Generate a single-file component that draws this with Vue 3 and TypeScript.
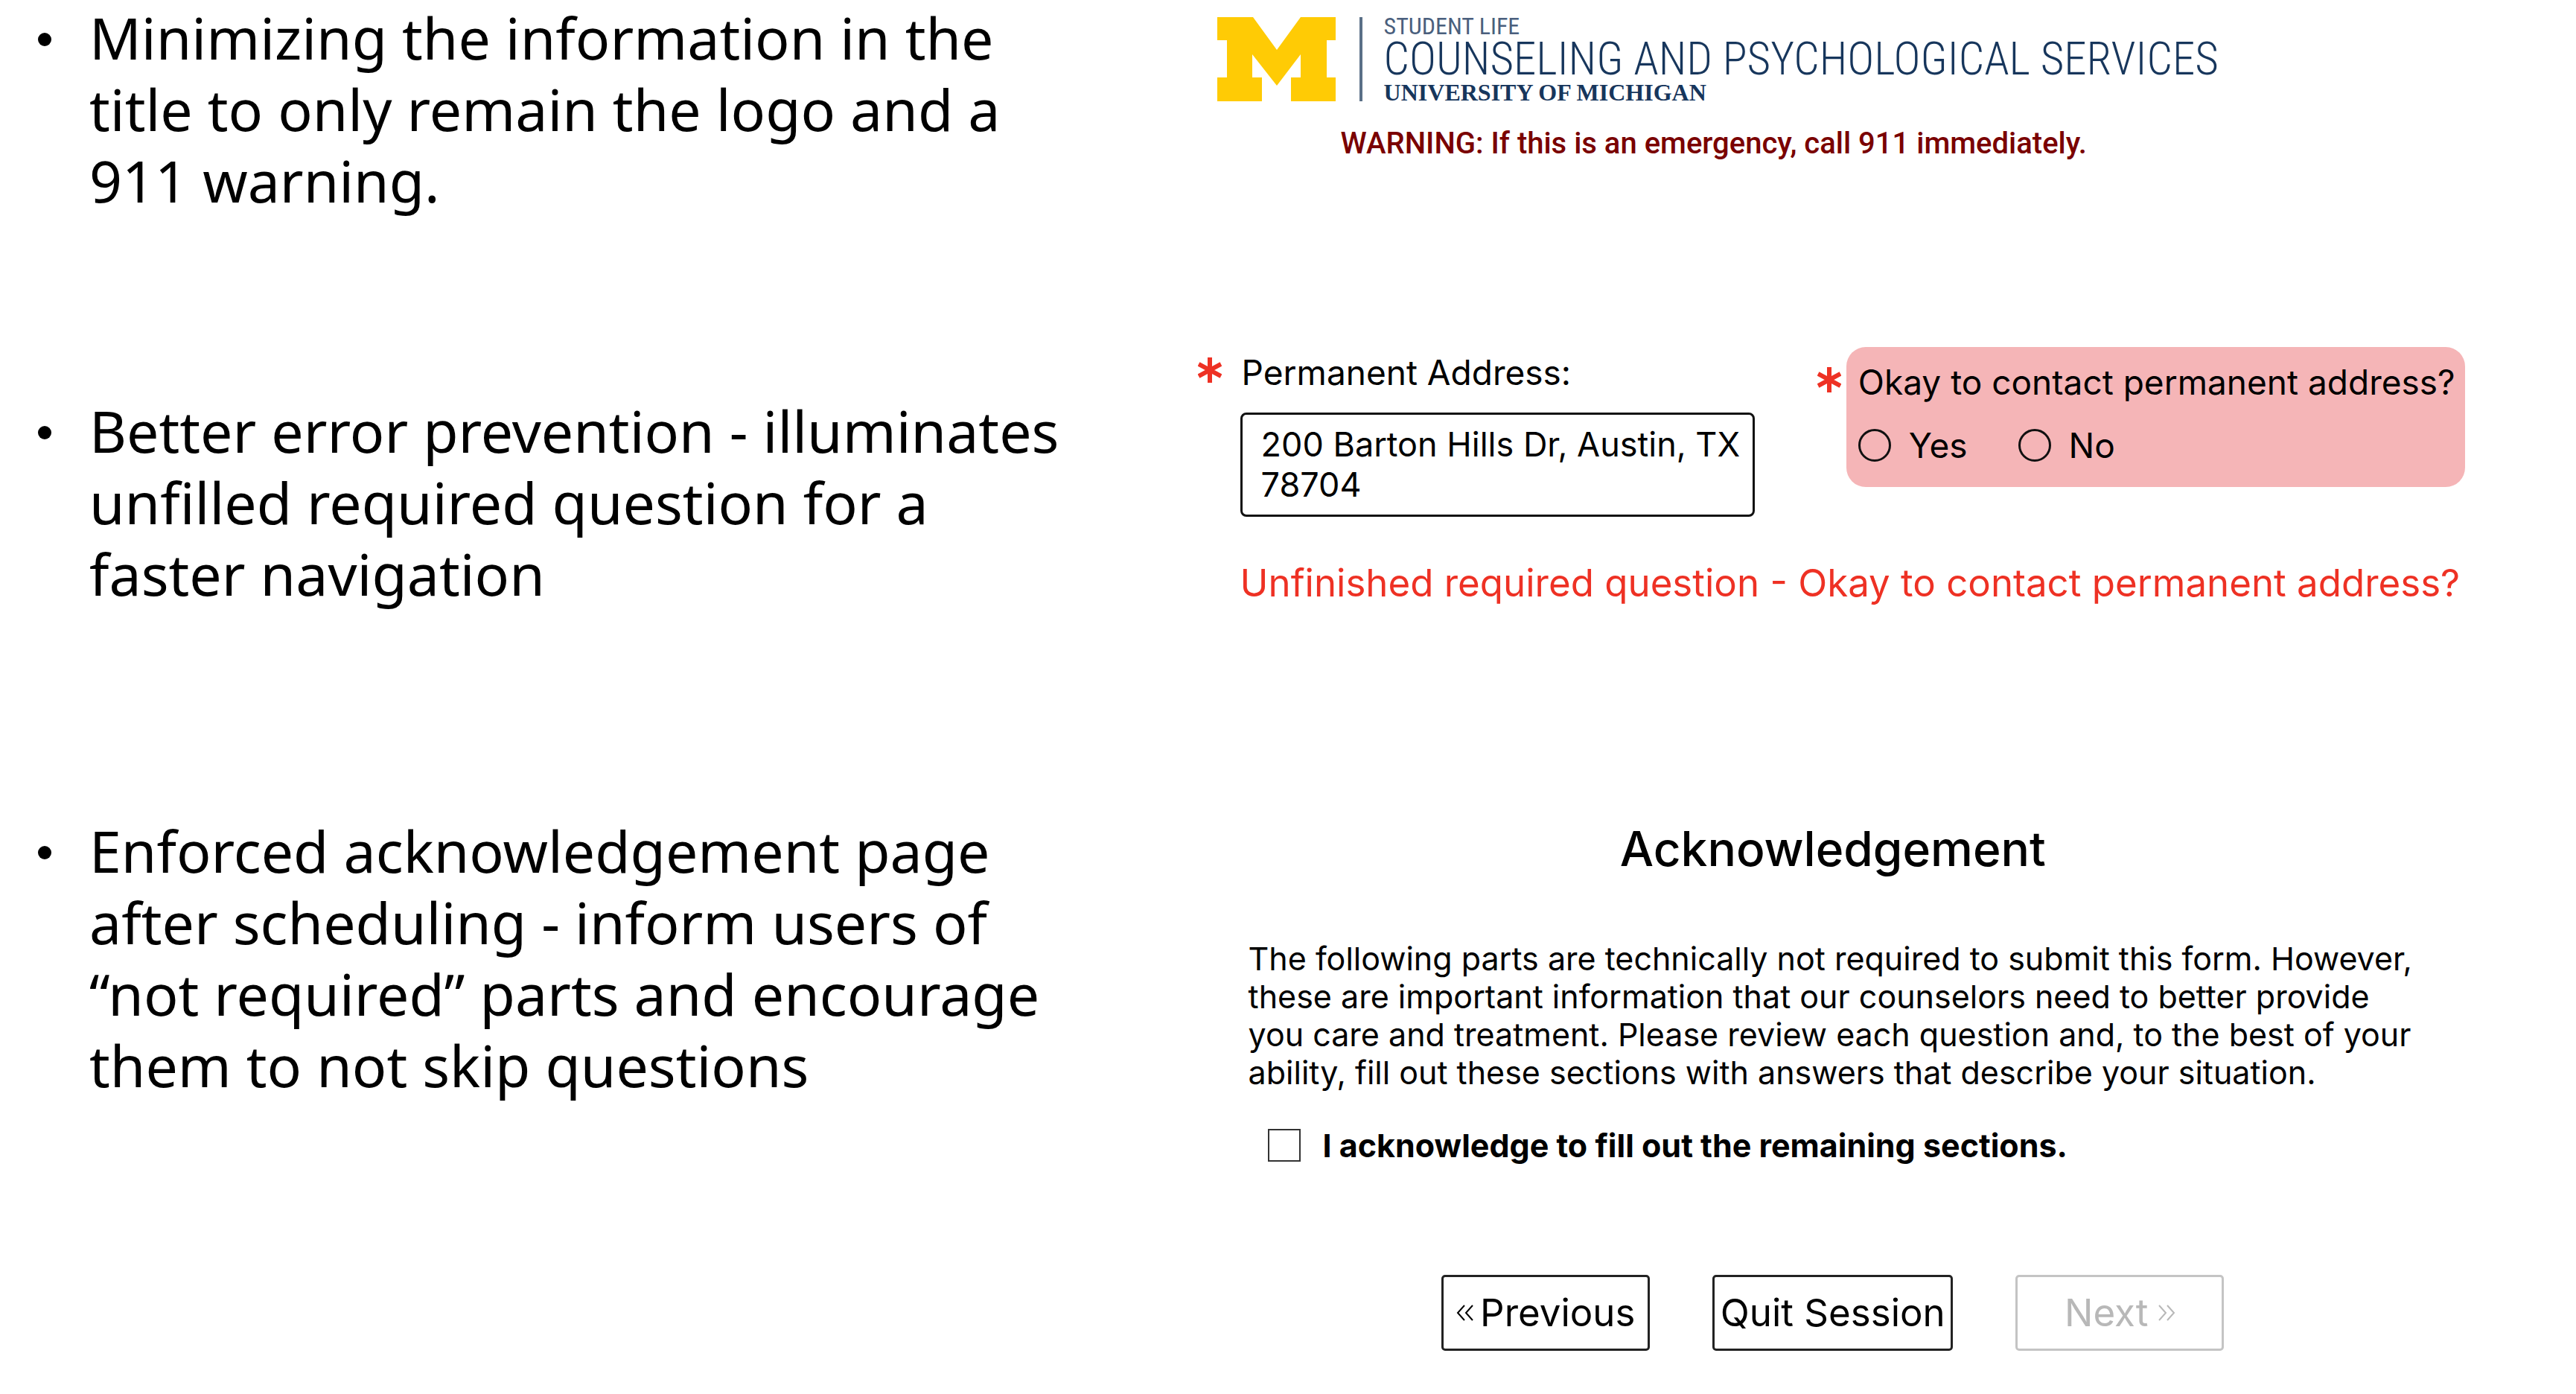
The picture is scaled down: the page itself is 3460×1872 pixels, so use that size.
<script setup lang="ts">
import { ref } from 'vue'

const notes: string[] = [
  'Minimizing the information in the\ntitle to only remain the logo and a\n911 warning.',
  'Better error prevention - illuminates\nunfilled required question for a\nfaster navigation',
  'Enforced acknowledgement page\nafter scheduling - inform users of\n“not required” parts and encourage\nthem to not skip questions',
]

const ackText: string = [
  'The following parts are technically not required to submit this form. However,',
  'these are important information that our counselors need to better provide',
  'you care and treatment. Please review each question and, to the best of your',
  'ability, fill out these sections with answers that describe your situation.',
].join('\n')

const address = ref<string>('200 Barton Hills Dr, Austin, TX 78704')
const contact = ref<string>('')
const contactOptions: string[] = ['Yes', 'No']
const acknowledged = ref<boolean>(false)
</script>

<template>
  <main class="page">
    <section class="row row-title">
      <ul class="note"><li>{{ notes[0] }}</li></ul>
      <header class="brand">
        <div class="logo">
          <svg class="logo-m" viewBox="0 0 161 113" aria-hidden="true">
            <path
              fill="#ffcb05"
              d="M0 0H48L80 44L112 0H159V31H147V81H159V113H99V81H112V50L80 92L47 50V81H60V113H0V81H13V31H0Z"
            />
          </svg>
          <div class="logo-text">
            <span class="unit">STUDENT LIFE</span>
            <span class="name">COUNSELING AND PSYCHOLOGICAL SERVICES</span>
            <span class="school">UNIVERSITY OF MICHIGAN</span>
          </div>
        </div>
        <p class="warning">WARNING: If this is an emergency, call 911 immediately.</p>
      </header>
    </section>

    <section class="row row-form">
      <ul class="note"><li>{{ notes[1] }}</li></ul>
      <form class="form" @submit.prevent>
        <div class="fields">
          <svg class="star star-address" viewBox="0 0 32 34" aria-hidden="true">
            <path d="M16 0V34M1 9L31 25M31 9L1 25" />
          </svg>
          <div class="field">
            <label for="address">Permanent Address:</label>
            <textarea id="address" v-model="address" rows="2" spellcheck="false"></textarea>
          </div>
          <svg class="star star-contact" viewBox="0 0 32 34" aria-hidden="true">
            <path d="M16 0V34M1 9L31 25M31 9L1 25" />
          </svg>
          <fieldset class="contact">
            <legend>Okay to contact permanent address?</legend>
            <div class="options">
              <label v-for="option in contactOptions" :key="option">
                <input v-model="contact" type="radio" name="contact" :value="option" />
                {{ option }}
              </label>
            </div>
          </fieldset>
        </div>
        <p class="error">Unfinished required question - Okay to contact permanent address?</p>
      </form>
    </section>

    <section class="row">
      <ul class="note"><li>{{ notes[2] }}</li></ul>
      <div class="ack">
        <h1>Acknowledgement</h1>
        <p class="ack-text">{{ ackText }}</p>
        <label class="ack-check">
          <input v-model="acknowledged" type="checkbox" />
          I acknowledge to fill out the remaining sections.
        </label>
        <div class="actions">
          <button type="button" class="side">
            <svg class="chevrons" viewBox="0 0 24 22" aria-hidden="true">
              <path d="M11 1L2 11L11 21M22 1L13 11L22 21" />
            </svg>
            Previous
          </button>
          <button type="button" class="quit">Quit Session</button>
          <button type="button" class="side next" disabled>
            Next
            <svg class="chevrons" viewBox="0 0 24 22" aria-hidden="true">
              <path d="M2 1L11 11L2 21M13 1L22 11L13 21" />
            </svg>
          </button>
        </div>
      </div>
    </section>
  </main>
</template>

<style>
body {
  margin: 0;
  background: #fff;
}
</style>

<style scoped>
.page {
  color: #000;
  font-family: Inter, "Liberation Sans", sans-serif;
  font-size: 46px;
  line-height: 56px;
}

.row {
  display: grid;
  grid-template-columns: 46% 54%;
}

.row-title {
  padding-top: 3px;
  margin-bottom: 175px;
}

.row-form {
  margin-bottom: 276px;
}

.row-form .note {
  padding-top: 65px;
}

.note {
  margin: 0;
  padding: 0 0 0 120px;
  list-style: none;
  font-family: "Noto Sans", sans-serif;
  font-size: 77px;
  line-height: 96px;
  white-space: pre;
}

.note li::before {
  content: "";
  float: left;
  width: 18px;
  height: 18px;
  margin: 41px 0 0 -69px;
  border-radius: 50%;
  background: #000;
}

.brand {
  padding: 20px 0 0 43px;
}

.logo {
  display: flex;
}

.logo-m {
  width: 161px;
  height: 113px;
  margin-right: 30px;
}

.logo-text {
  display: flex;
  flex-direction: column;
  padding-left: 29px;
  border-left: 4px solid #5a7087;
  height: 113px;
  color: #17365c;
  font-family: "Roboto Condensed", Roboto, sans-serif;
  white-space: nowrap;
}

.unit {
  font-size: 32px;
  line-height: 24px;
  color: #4a5f7d;
}

.name {
  font-weight: 350;
  font-size: 61px;
  line-height: 64px;
}

.school {
  font-family: "Liberation Serif", serif;
  font-weight: 700;
  font-size: 32px;
  line-height: 26px;
}

.warning {
  margin: 31px 0 0 166px;
  color: #7a0000;
  font-family: Roboto, sans-serif;
  font-weight: 500;
  font-size: 40px;
  line-height: 52px;
}

.form {
  padding: 0 149px 0 17px;
}

.fields {
  display: grid;
  grid-template-columns: 57px minmax(0, 691fr) 123px minmax(0, 831fr);
  align-items: start;
}

.star {
  width: 32px;
  height: 34px;
  fill: none;
  stroke: #ee3124;
  stroke-width: 6;
}

.star-address {
  margin-top: 14px;
}

.star-contact {
  margin: 27px 0 0 84px;
}

.field {
  padding-top: 6px;
}

.field label {
  display: block;
  padding-left: 2px;
  margin-bottom: 26px;
}

textarea {
  display: block;
  box-sizing: border-box;
  width: 100%;
  height: 140px;
  margin: 0;
  padding: 13px 0 13px 25px;
  border: 3px solid #111;
  border-radius: 8px;
  background: #fff;
  color: #000;
  font: inherit;
  font-size: 45px;
  line-height: 54px;
  resize: none;
  overflow: hidden;
}

.contact {
  min-width: 0;
  margin: 0;
  padding: 19px 16px 28px;
  border: 0;
  border-radius: 26px;
  background: #f5b5b7;
}

.contact legend {
  float: left;
  width: 100%;
  padding: 0;
  margin-bottom: 29px;
  white-space: nowrap;
}

.options {
  clear: both;
  display: flex;
  gap: 68px;
}

.options label {
  display: flex;
  align-items: center;
  gap: 24px;
}

input {
  appearance: none;
  box-sizing: border-box;
  flex: none;
  width: 44px;
  height: 44px;
  margin: 0;
}

input[type="radio"] {
  border: 3px solid #111;
  border-radius: 50%;
}

input[type="checkbox"] {
  border: 2px solid #333;
}

.error {
  margin: 57px 0 0 57px;
  color: #ee3124;
  font-size: 51px;
  line-height: 64px;
  white-space: nowrap;
}

.ack {
  padding: 5px 213px 0 85px;
}

h1 {
  margin: 0 0 82px;
  font-weight: 500;
  font-size: 64px;
  line-height: 80px;
  text-align: center;
}

.ack-text {
  margin: 0 0 46px;
  font-size: 43px;
  line-height: 51px;
  white-space: pre;
}

.ack-check {
  display: flex;
  align-items: center;
  gap: 30px;
  padding-left: 26px;
  margin-bottom: 148px;
  font-weight: 700;
  font-size: 43px;
  line-height: 52px;
}

.actions {
  display: flex;
  justify-content: center;
  gap: 84px;
}

button {
  display: flex;
  align-items: center;
  justify-content: center;
  gap: 8px;
  box-sizing: border-box;
  height: 102px;
  padding: 0;
  border: 3px solid #222;
  border-radius: 5px;
  background: #fff;
  color: #000;
  font: inherit;
  font-size: 51px;
  white-space: nowrap;
}

.side {
  width: 280px;
}

.quit {
  width: 323px;
}

.next {
  gap: 12px;
  border-color: #c4c4c4;
  color: #b8b8b8;
}

.chevrons {
  width: 24px;
  height: 22px;
  fill: none;
  stroke: currentColor;
  stroke-width: 2;
}
</style>
